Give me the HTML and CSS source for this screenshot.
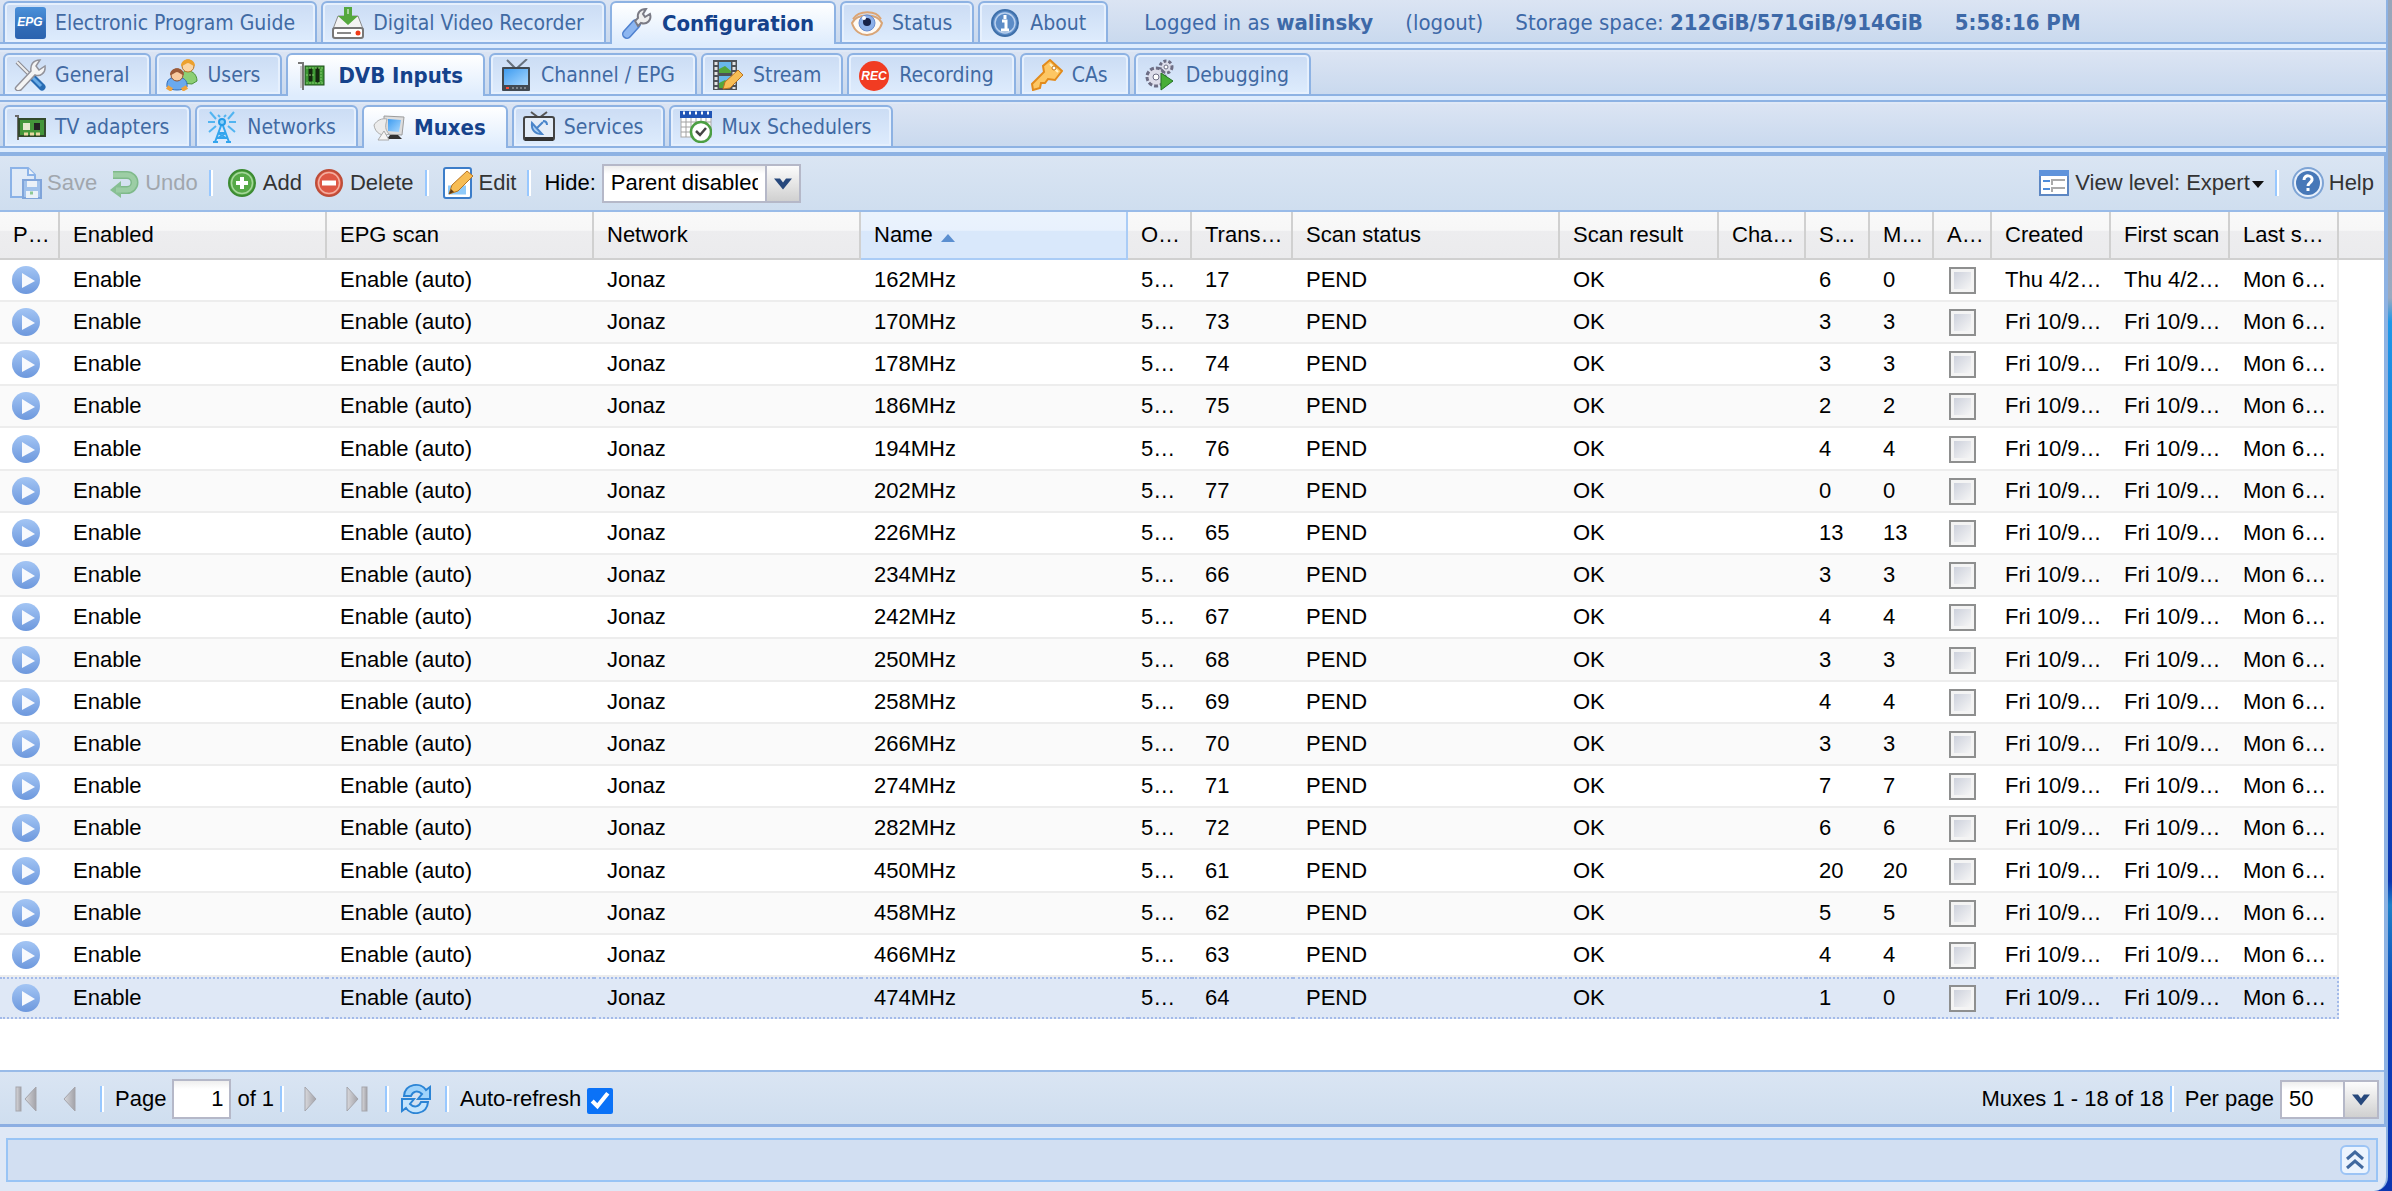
FILE: index.html
```html
<!DOCTYPE html>
<html lang="en">
<head>
    <meta charset="UTF-8">
    <title>Tvheadend</title>
    <link rel="stylesheet" href="styles.css">
</head>
<body>
    <!-- Icon definitions -->
    <svg class="defs" aria-hidden="true">
        <defs>
            <linearGradient id="gBlue" x1="0" y1="0" x2="0" y2="1"><stop offset="0" stop-color="#4a90d9"/><stop offset="1" stop-color="#2a62b0"/></linearGradient>
            <linearGradient id="gScreen" x1="0" y1="0" x2="1" y2="1"><stop offset="0" stop-color="#3f9cf0"/><stop offset="1" stop-color="#a8d8ff"/></linearGradient>
            <linearGradient id="gPlay" x1="0" y1="0" x2="0" y2="1"><stop offset="0" stop-color="#a3c5f4"/><stop offset="1" stop-color="#6d98dd"/></linearGradient>
            <linearGradient id="gGrey" x1="0" y1="0" x2="1" y2="0"><stop offset="0" stop-color="#d8d8dc"/><stop offset="1" stop-color="#a2a2a8"/></linearGradient>
        </defs>
        <symbol id="i-dvr" viewBox="0 0 32 32">
            <path d="M6 9h20l5 13H1z" fill="#f3f3f3" stroke="#8b8b8b"/>
            <rect x="1" y="21" width="30" height="10" rx="2" fill="#fff" stroke="#777" stroke-width="2"/>
            <path d="M5 26h14" stroke="#888" stroke-width="2"/>
            <circle cx="26" cy="26" r="2.5" fill="#f03a17"/>
            <path d="M12 0h8v9h6L16 18 6 9h6z" fill="#55a83e"/>
            <path d="M16 2v5" stroke="#fff" stroke-width="1"/>
        </symbol>
        <symbol id="i-wrench" viewBox="0 0 32 32">
            <path d="M15 16L6 26" stroke="#4f81cf" stroke-width="10" stroke-linecap="round"/>
            <path d="M15 16L6 26" stroke="#8db6f0" stroke-width="7" stroke-linecap="round"/>
            <path d="M14 13l3-3c-1-5 2-9 8-9l-3 5 2 3 5-3c2 6-3 11-9 9l-3 3z" fill="#eee" stroke="#7b7b85" stroke-width="2"/>
        </symbol>
        <symbol id="i-eye" viewBox="0 0 32 32">
            <path d="M1 16C6 6 26 6 31 16c-4 15-25 17-30 0z" fill="#fffaf3" stroke="#d8a577" stroke-width="2"/>
            <path d="M2 12C8 3 25 3 30 12" fill="none" stroke="#dda573" stroke-width="2"/>
            <circle cx="16" cy="16" r="8" fill="#8db1ea" stroke="#688dd1"/>
            <circle cx="16" cy="15" r="4" fill="#17234a"/>
            <circle cx="13" cy="11" r="2" fill="#fff"/>
        </symbol>
        <symbol id="i-info" viewBox="0 0 32 32">
            <circle cx="16" cy="16" r="13" fill="#5c8cc7" stroke="#3f70aa" stroke-width="2"/>
            <circle cx="16" cy="16" r="10" fill="none" stroke="#b9d0ee" stroke-width="1.5"/>
            <path d="M16 8v4M13 14h4v9M12 23h8" stroke="#fff" stroke-width="3" fill="none"/>
        </symbol>
        <symbol id="i-tools" viewBox="0 0 32 32">
            <path d="M3 3l14 14" stroke="#8a8a92" stroke-width="4"/>
            <path d="M3 3l14 14" stroke="#eee" stroke-width="2"/>
            <path d="M18 18l10 10" stroke="#286cb4" stroke-width="7" stroke-linecap="round"/>
            <path d="M18 18l9 9" stroke="#69ace7" stroke-width="3"/>
            <path d="M2 28l15-16c-1-6 2-11 9-11l-4 6 3 4 6-4c1 7-5 11-10 9L7 31c-4 2-7-1-5-3z" fill="#f4f4f4" stroke="#92929a" stroke-width="1.5"/>
        </symbol>
        <symbol id="i-users" viewBox="0 0 32 32">
            <path d="M14 24c-1-9 3-12 8-12s9 4 9 10l-5 3z" fill="#8ccf75" stroke="#4c933c"/>
            <circle cx="22" cy="7" r="6" fill="#fbd5a4" stroke="#b87423"/>
            <path d="M15 7c0-9 14-9 14 0-3 0-5-3-7-3s-4 3-7 3z" fill="#eca12f"/>
            <path d="M1 28c-1-8 4-10 10-10s11 3 10 10c-5 4-15 4-20 0z" fill="#6aa9ee" stroke="#2f6cb9"/>
            <path d="M1 28l5 3M21 28l-5 3" stroke="#f0a33c" stroke-width="4"/>
            <circle cx="11" cy="16" r="6" fill="#f8cba0" stroke="#8d5432"/>
            <path d="M4 16c0-9 14-9 14 0-3 0-5-3-7-3s-4 3-7 3z" fill="#9c5b38"/>
        </symbol>
        <symbol id="i-card" viewBox="0 0 32 32">
            <path d="M1 3h5v27" fill="none" stroke="#777" stroke-width="2"/>
            <path d="M4 6v22" stroke="#c8c8c8" stroke-width="2"/>
            <rect x="8" y="6" width="19" height="19" fill="#3f9a35" stroke="#1f4f1b"/>
            <path d="M12 9h3v12h-3zM19 8h3v14h-3z" fill="#15280f" stroke="#15280f"/>
            <path d="M9 8h17M9 23h17M9 15h9M24 9v13" stroke="#86c96e" stroke-dasharray="2 1"/>
        </symbol>
        <symbol id="i-tv" viewBox="0 0 32 32">
            <path d="M7 1l9 9L27 0" fill="none" stroke="#68727e" stroke-width="2"/>
            <rect x="2" y="8" width="28" height="24" rx="1" fill="#424a52"/>
            <rect x="4" y="10" width="24" height="16" fill="url(#gScreen)"/>
            <path d="M6 29h3" stroke="#ff4b37" stroke-width="2"/><path d="M12 29h16" stroke="#b7bcc2" stroke-width="1" stroke-dasharray="2 2"/>
        </symbol>
        <symbol id="i-film" viewBox="0 0 32 32">
            <rect x="1" y="1" width="24" height="30" fill="#4d5157"/>
            <path d="M4 3v27M22 3v27" stroke="#e2e2e2" stroke-width="3" stroke-dasharray="3 2"/>
            <rect x="7" y="3" width="12" height="11" fill="#69b7ea"/><rect x="7" y="17" width="12" height="12" fill="#69b7ea"/>
            <path d="M7 10l6-3 6 5v2H7zM7 24l6-3 6 5v3H7z" fill="#54a63c"/>
            <path d="M11 30l2-7L26 11l5 5-13 13z" fill="#f7bd55" stroke="#ba7320"/>
        </symbol>
        <symbol id="i-key" viewBox="0 0 32 32">
            <path d="M19 1l12 11-7 9-7-1-3 4h-4l-1 5-7 2-1-6 12-12-1-6z" fill="#fdc764" stroke="#e28b1c" stroke-width="2"/>
            <path d="M19 5l8 8" stroke="#fff0c4" stroke-width="2"/><circle cx="23" cy="9" r="2" fill="#fff" stroke="#c57614"/>
        </symbol>
        <symbol id="i-gears" viewBox="0 0 32 32">
            <circle cx="21" cy="8" r="6" fill="#ddddea" stroke="#6d6d84" stroke-width="3" stroke-dasharray="3 2"/><circle cx="21" cy="8" r="2" fill="#fff" stroke="#6d6d84"/>
            <circle cx="11" cy="18" r="9" fill="#ddddea" stroke="#6d6d84" stroke-width="3" stroke-dasharray="4 2"/><circle cx="11" cy="18" r="3" fill="#fff" stroke="#6d6d84"/>
            <path d="M16 14l12 8-12 9z" fill="#47ae36" stroke="#247323"/>
        </symbol>
        <symbol id="i-adapter" viewBox="0 0 32 32">
            <path d="M1 5h3v24" fill="none" stroke="#686868" stroke-width="2"/>
            <rect x="5" y="8" width="26" height="17" fill="#44963a" stroke="#334a2b" stroke-width="2"/>
            <rect x="9" y="12" width="7" height="7" fill="#e5e9cd"/><rect x="20" y="12" width="6" height="7" fill="#222"/>
            <path d="M10 23h16" stroke="#e8d9a0" stroke-width="3" stroke-dasharray="4 2"/>
        </symbol>
        <symbol id="i-tower" viewBox="0 0 32 32">
            <path d="M16 12L9 31M16 12l7 19M12 22h8M11 27h10M7 31h5M20 31h5M12 27l8-5M20 27l-8-5" fill="none" stroke="#34a5ee" stroke-width="2"/>
            <circle cx="16" cy="11" r="3" fill="#8fd1fa" stroke="#269ce8" stroke-width="2"/>
            <path d="M10 8L4 1M9 11H2M10 15l-7 6M22 8l6-7M23 11h7M22 15l7 6M12 4l2 2M20 4l-2 2" stroke="#51b4f1" stroke-width="2"/>
        </symbol>
        <symbol id="i-mux" viewBox="0 0 32 32">
            <path d="M11 4l20 1-2 18-18-1z" fill="#ddd" stroke="#9c9c9c"/>
            <path d="M15 7l13 1-2 12-11-1z" fill="url(#gScreen)"/>
            <path d="M17 23h8l4 4H14z" fill="#333"/>
            <path d="M1 13c3-5 8-7 13-6-2 8-2 10 2 15-7 3-14-1-15-9z" fill="#ececec" stroke="#acacac"/>
            <path d="M5 28l6-9 5 9z" fill="#f5f5f5" stroke="#aaa"/>
        </symbol>
        <symbol id="i-services" viewBox="0 0 32 32">
            <path d="M8 1l8 6 8-6" fill="none" stroke="#555" stroke-width="2"/>
            <rect x="1" y="6" width="30" height="23" rx="2" fill="#e4edf8" stroke="#444" stroke-width="2"/>
            <path d="M2 28h28" stroke="#333" stroke-width="4"/>
            <path d="M9 12c-1 7 3 11 10 11zM14 17l6-6M20 10c2 0 4 1 4 4" fill="#acd0f5" stroke="#4985ca" stroke-width="2"/>
        </symbol>
        <symbol id="i-sched" viewBox="0 0 32 32">
            <rect x="1" y="1" width="30" height="25" fill="#fff" stroke="#a9a9a9"/>
            <path d="M1 11h30M1 16h30M1 21h30M6 6v20M11 6v20M16 6v20M21 6v20M26 6v20" stroke="#a2a2a2"/>
            <path d="M0 0h32v7H0z" fill="#2054b5"/><path d="M3 2h28" stroke="#fff" stroke-width="3" stroke-dasharray="2 4"/>
            <circle cx="21" cy="21" r="10" fill="#fff" stroke="#4c9f43" stroke-width="2.5"/>
            <path d="M16 20l4 4 6-7" fill="none" stroke="#444" stroke-width="2.5"/>
        </symbol>
        <symbol id="i-save" viewBox="0 0 32 32">
            <path d="M1 1h17l7 7v22H1z" fill="#eaf2fc" stroke="#4f8ce0" stroke-width="2"/>
            <path d="M18 1v7h7" fill="#fff" stroke="#4f8ce0" stroke-width="2"/>
            <rect x="13" y="13" width="18" height="18" fill="#7aaae9" stroke="#3d74c8" stroke-width="2"/>
            <rect x="17" y="14" width="10" height="6" fill="#fff"/><rect x="16" y="24" width="12" height="7" fill="#fff"/><path d="M20 26h3" stroke="#55b54a" stroke-width="3"/>
        </symbol>
        <symbol id="i-undo" viewBox="0 0 32 32">
            <path d="M5 8h14a7 7 0 0 1 0 15H9" fill="none" stroke="#3a9a38" stroke-width="8"/>
            <path d="M2 23l11-9v17z" fill="#4aa548"/>
            <path d="M5 8h14a7 7 0 0 1 0 15H8" fill="none" stroke="#6fbd68" stroke-width="5"/>
        </symbol>
        <symbol id="i-add" viewBox="0 0 32 32">
            <circle cx="16" cy="16" r="13" fill="#56a947" stroke="#3c8b32" stroke-width="2"/><circle cx="16" cy="16" r="10.5" fill="none" stroke="#a6d79b" stroke-width="1.5"/>
            <path d="M16 10v12M10 16h12" stroke="#fff" stroke-width="4"/>
        </symbol>
        <symbol id="i-delete" viewBox="0 0 32 32">
            <circle cx="16" cy="16" r="13" fill="#de5744" stroke="#bd4d38" stroke-width="2"/><circle cx="16" cy="16" r="10.5" fill="none" stroke="#f3ae9f" stroke-width="1.5"/>
            <path d="M9 16h14" stroke="#fff" stroke-width="5"/>
        </symbol>
        <symbol id="i-edit" viewBox="0 0 32 32">
            <rect x="2" y="1" width="27" height="30" rx="2" fill="#fff" stroke="#3c7dc9" stroke-width="2"/>
            <path d="M6 25h18M6 21h18" stroke="#8fcaf9" stroke-width="5"/>
            <path d="M7 27l3-9L25 4l6 5-15 15z" fill="#f7bd55" stroke="#b87624"/><path d="M7 27l2-5 3 3z" fill="#5b3a17"/>
        </symbol>
        <symbol id="i-view" viewBox="0 0 32 32">
            <rect x="2" y="4" width="28" height="24" fill="#fff" stroke="#5d87c3" stroke-width="2"/>
            <path d="M1 6h30" stroke="#5f93db" stroke-width="6"/>
            <path d="M5 14h7M5 22h7" stroke="#4f8cd9" stroke-width="2"/><path d="M14 18v-5h13M14 25v-4h13" fill="none" stroke="#aaa" stroke-width="2"/>
        </symbol>
        <symbol id="i-help" viewBox="0 0 32 32">
            <circle cx="16" cy="16" r="15" fill="#e8f0fb" stroke="#7ea4d5" stroke-width="2"/><circle cx="16" cy="16" r="12" fill="#4778b8"/>
            <path d="M12 13c0-6 9-5 8 0-1 3-4 3-4 6M16 21v3" fill="none" stroke="#fff" stroke-width="3"/>
        </symbol>
        <symbol id="i-play" viewBox="0 0 32 32">
            <circle cx="16" cy="16" r="14" fill="url(#gPlay)"/>
            <path d="M12 9l13 8-13 7z" fill="#f7f9fd"/>
        </symbol>
        <symbol id="i-prev" viewBox="0 0 32 32"><path d="M20 4v24L9 16z" fill="url(#gGrey)" stroke="#a5a5ab"/></symbol>
        <symbol id="i-next" viewBox="0 0 32 32"><path d="M10 4v24l11-12z" fill="url(#gGrey)" stroke="#a5a5ab"/></symbol>
        <symbol id="i-first" viewBox="0 0 32 32"><path d="M26 4v24L15 16z" fill="url(#gGrey)" stroke="#a5a5ab"/><rect x="6" y="4" width="5" height="24" fill="url(#gGrey)" stroke="#a5a5ab"/></symbol>
        <symbol id="i-last" viewBox="0 0 32 32"><path d="M7 4v24l11-12z" fill="url(#gGrey)" stroke="#a5a5ab"/><rect x="22" y="4" width="5" height="24" fill="url(#gGrey)" stroke="#a5a5ab"/></symbol>
        <symbol id="i-refresh" viewBox="0 0 32 32">
            <path d="M4 13c1-13 17-14 22-6l4-3v12H18l4-5c-4-4-9-3-11 2z" fill="#9fd3fb" stroke="#2b84d5" stroke-width="2"/>
            <path d="M28 19c-1 13-17 14-22 6l-4 3V16h12l-4 5c4 4 9 3 11-2z" fill="#c4e4fd" stroke="#2b84d5" stroke-width="2"/>
        </symbol>
        <symbol id="i-chevron" viewBox="0 0 32 32"><path d="M7 11h6l3 4 3-4h6l-9 11z" fill="#27487c"/></symbol>
        <symbol id="i-collapse" viewBox="0 0 32 32"><path d="M8 15l8-7 8 7M8 24l8-7 8 7" fill="none" stroke="#41699f" stroke-width="3"/></symbol>
    </svg>

    <div class="app">
        <header>
            <nav class="strip">
                <a class="tab" href="#">
                    <svg viewBox="0 0 32 32">
                        <rect x="1" y="0" width="31" height="32" rx="3" fill="url(#gBlue)"/>
                        <path d="M2 21c10-1 20-3 29-7v15a2 2 0 0 1-2 2H4a2 2 0 0 1-2-2z" fill="#2c63ad" opacity=".5"/>
                        <text x="16" y="19" class="icon-text">EPG</text>
                    </svg>Electronic Program Guide</a>
                <a class="tab" href="#"><svg><use href="#i-dvr"/></svg>Digital Video Recorder</a>
                <a class="tab active" href="#"><svg><use href="#i-wrench"/></svg>Configuration</a>
                <a class="tab" href="#"><svg><use href="#i-eye"/></svg>Status</a>
                <a class="tab" href="#"><svg><use href="#i-info"/></svg>About</a>
                <div class="login">
                    <span>Logged in as <b>walinsky</b></span>
                    <a href="#">(logout)</a>
                    <span>Storage space: <b>212GiB/571GiB/914GiB</b></span>
                    <b>5:58:16 PM</b>
                </div>
            </nav>
            <nav class="strip">
                <a class="tab" href="#"><svg><use href="#i-tools"/></svg>General</a>
                <a class="tab" href="#"><svg><use href="#i-users"/></svg>Users</a>
                <a class="tab active" href="#"><svg><use href="#i-card"/></svg>DVB Inputs</a>
                <a class="tab" href="#"><svg><use href="#i-tv"/></svg>Channel / EPG</a>
                <a class="tab" href="#"><svg><use href="#i-film"/></svg>Stream</a>
                <a class="tab" href="#">
                    <svg viewBox="0 0 32 32">
                        <circle cx="16" cy="17" r="15" fill="#f13c22"/>
                        <text x="16" y="21" class="icon-text">REC</text>
                    </svg>Recording</a>
                <a class="tab" href="#"><svg><use href="#i-key"/></svg>CAs</a>
                <a class="tab" href="#"><svg><use href="#i-gears"/></svg>Debugging</a>
            </nav>
            <nav class="strip">
                <a class="tab" href="#"><svg><use href="#i-adapter"/></svg>TV adapters</a>
                <a class="tab" href="#"><svg><use href="#i-tower"/></svg>Networks</a>
                <a class="tab active" href="#"><svg><use href="#i-mux"/></svg>Muxes</a>
                <a class="tab" href="#"><svg><use href="#i-services"/></svg>Services</a>
                <a class="tab" href="#"><svg><use href="#i-sched"/></svg>Mux Schedulers</a>
            </nav>
        </header>

        <main class="panel">
            <div class="toolbar">
                <button class="btn" disabled><svg><use href="#i-save"/></svg>Save</button>
                <button class="btn" disabled><svg><use href="#i-undo"/></svg>Undo</button>
                <i class="sep"></i>
                <button class="btn"><svg><use href="#i-add"/></svg>Add</button>
                <button class="btn"><svg><use href="#i-delete"/></svg>Delete</button>
                <i class="sep"></i>
                <button class="btn"><svg><use href="#i-edit"/></svg>Edit</button>
                <i class="sep"></i>
                <label for="hide">Hide:</label>
                <span class="combo">
                    <select id="hide"><option>Parent disabled</option></select>
                    <svg><use href="#i-chevron"/></svg>
                </span>
                <span class="fill"></span>
                <button class="btn"><svg><use href="#i-view"/></svg><span>View level: Expert<i class="arrow"></i></span></button>
                <i class="sep"></i>
                <button class="btn"><svg><use href="#i-help"/></svg>Help</button>
            </div>

            <div class="grid">
                <table>
                    <colgroup>
                        <col class="w-play"><col class="w-wide"><col class="w-wide"><col class="w-wide"><col class="w-wide">
                        <col class="w-num"><col class="w-ts"><col class="w-wide"><col class="w-result"><col class="w-cha">
                        <col class="w-num"><col class="w-num"><col class="w-check">
                        <col class="w-date"><col class="w-date"><col class="w-last"><col>
                    </colgroup>
                    <thead>
                        <tr>
                            <th>P…</th><th>Enabled</th><th>EPG scan</th><th>Network</th><th class="sorted">Name</th>
                            <th>O…</th><th>Trans…</th><th>Scan status</th><th>Scan result</th><th>Cha…</th>
                            <th>S…</th><th>M…</th><th>A…</th><th>Created</th><th>First scan</th><th>Last s…</th><th></th>
                        </tr>
                    </thead>
                    <tbody id="rows"></tbody>
                </table>
            </div>

            <div class="toolbar paging">
                <button class="btn" aria-label="First page"><svg><use href="#i-first"/></svg></button>
                <button class="btn" aria-label="Previous page"><svg><use href="#i-prev"/></svg></button>
                <i class="sep"></i>
                <label for="page">Page</label>
                <input id="page" class="page" type="text" value="1">
                <span>of 1</span>
                <i class="sep"></i>
                <button class="btn" aria-label="Next page"><svg><use href="#i-next"/></svg></button>
                <button class="btn" aria-label="Last page"><svg><use href="#i-last"/></svg></button>
                <i class="sep"></i>
                <button class="btn" aria-label="Refresh"><svg><use href="#i-refresh"/></svg></button>
                <i class="sep"></i>
                <label for="auto">Auto-refresh</label>
                <input id="auto" class="auto" type="checkbox" checked>
                <span class="fill"></span>
                <span>Muxes 1 - 18 of 18</span>
                <i class="sep"></i>
                <label for="perpage">Per page</label>
                <span class="combo small">
                    <select id="perpage"><option>50</option></select>
                    <svg><use href="#i-chevron"/></svg>
                </span>
            </div>
        </main>

        <footer>
            <div class="log">
                <button class="expand" aria-label="Expand log"><svg><use href="#i-collapse"/></svg></button>
            </div>
        </footer>
    </div>

    <script>
        // name, transport stream id, services, mapped
        const muxes = [
            ['162MHz', 17, 6, 0], ['170MHz', 73, 3, 3], ['178MHz', 74, 3, 3],
            ['186MHz', 75, 2, 2], ['194MHz', 76, 4, 4], ['202MHz', 77, 0, 0],
            ['226MHz', 65, 13, 13], ['234MHz', 66, 3, 3], ['242MHz', 67, 4, 4],
            ['250MHz', 68, 3, 3], ['258MHz', 69, 4, 4], ['266MHz', 70, 3, 3],
            ['274MHz', 71, 7, 7], ['282MHz', 72, 6, 6], ['450MHz', 61, 20, 20],
            ['458MHz', 62, 5, 5], ['466MHz', 63, 4, 4], ['474MHz', 64, 1, 0]
        ];

        document.getElementById('rows').innerHTML = muxes.map((m, i) => {
            const date = i === 0 ? 'Thu 4/2…' : 'Fri 10/9…';
            return `<tr${i === muxes.length - 1 ? ' class="selected"' : ''}>
                <td class="play"><svg><use href="#i-play"/></svg></td>
                <td>Enable</td><td>Enable (auto)</td><td>Jonaz</td><td>${m[0]}</td>
                <td>5…</td><td>${m[1]}</td><td>PEND</td><td>OK</td><td></td>
                <td>${m[2]}</td><td>${m[3]}</td>
                <td class="check"><input type="checkbox" aria-label="${m[0]}"></td>
                <td>${date}</td><td>${date}</td><td>Mon 6…</td><td></td>
            </tr>`;
        }).join('');
    </script>
</body>
</html>
```

FILE: styles.css
```css
* {
    box-sizing: border-box;
}
body {
    margin: 0;
    padding-right: 4px;
    font-family: "Liberation Sans", Arial, sans-serif;
    font-size: 22px;
    line-height: 28px;
    color: #000;
    background: linear-gradient(#98a6ba 0, #9aaac0 25%, #1f98e8 27%, #1560cc 50%, #0b36b0 74%, #1d80c8 76%, #0b3fb8 85%, #0b36b0 100%);
}
.defs {
    position: absolute;
    width: 0;
    height: 0;
}
.icon-text {
    font: italic bold 12px "Liberation Sans", Arial, sans-serif;
    fill: #fff;
    text-anchor: middle;
}
.app {
    display: flex;
    flex-direction: column;
    min-height: 100vh;
    background: #dfe8f6;
    border-right: 2px solid #8db2e3;
    border-bottom-right-radius: 14px;
}
svg {
    width: 32px;
    height: 32px;
    flex: none;
}

/* Tab strips */
.strip {
    display: flex;
    gap: 4px;
    height: 52px;
    padding: 1px 3px 8px;
    background: linear-gradient(#8db2e3, #8db2e3) 0 42px / 100% 2px no-repeat,
                linear-gradient(#8db2e3, #8db2e3) 0 48px / 100% 2px no-repeat,
                linear-gradient(#deecfd, #deecfd) 0 44px / 100% 4px no-repeat,
                linear-gradient(#dbe4f3, #c9d9ee 43px, #dfe8f6 50px);
}
.tab {
    display: flex;
    align-items: center;
    gap: 9px;
    height: 43px;
    padding: 0 20px 0 9px;
    border: 2px solid #8db2e3;
    border-radius: 6px 6px 0 0;
    font: 21px "DejaVu Sans Condensed", Tahoma, sans-serif;
    color: #416aa3;
    text-decoration: none;
    white-space: nowrap;
    background: linear-gradient(#cbdcf4, #deecfd);
    box-shadow: inset 0 0 0 2px #e6f0fd;
}
.tab.active {
    border-bottom: 0;
    font-size: 22px;
    font-weight: bold;
    color: #15428b;
    background: linear-gradient(#fff, #deecfd);
    box-shadow: none;
}
.login {
    display: flex;
    align-items: center;
    gap: 32px;
    margin-left: 32px;
    font: 22px "DejaVu Sans Condensed", Tahoma, sans-serif;
    color: #3d69a8;
    white-space: nowrap;
}
.login a {
    color: inherit;
    text-decoration: none;
}

/* Toolbars */
.panel {
    display: flex;
    flex: 1;
    flex-direction: column;
    margin-top: -2px;
    border-top: 2px solid #8db2e3;
    border-right: 2px solid #8db2e3;
}
.toolbar {
    display: flex;
    align-items: center;
    height: 56px;
    padding: 0 5px 0 10px;
    gap: 6px;
    border-bottom: 2px solid #99bbe8;
    background: linear-gradient(#dae5f3, #cfdeef);
    white-space: nowrap;
}
.btn {
    display: flex;
    align-items: center;
    gap: 5px;
    margin: 0 5px 0 0;
    padding: 0;
    border: 0;
    font: inherit;
    color: #333;
    background: none;
}
.btn:disabled {
    opacity: 0.55;
    color: #777;
}
.sep {
    width: 4px;
    height: 26px;
    margin-right: 7px;
    border-left: 2px solid #98c8ff;
    border-right: 2px solid #fff;
}
.fill {
    flex: 1;
}
.arrow {
    display: inline-block;
    margin-left: 2px;
    border: 6px solid transparent;
    border-top: 7px solid #111;
    border-bottom: 0;
    vertical-align: middle;
}
.combo {
    display: flex;
    width: 199px;
    height: 39px;
    border: 2px solid #b5b8c8;
    background: #fff;
}
.combo select {
    flex: 1;
    min-width: 0;
    padding: 0 7px;
    border: 0;
    border-right: 2px solid #b5b8c8;
    appearance: none;
    font: inherit;
    color: #000;
    background: linear-gradient(#eee, #fff 8px);
}
.combo svg {
    height: 35px;
    background: linear-gradient(#fcfcfc, #d0d0d0);
}
.combo.small {
    width: 99px;
}

/* Grid */
.grid {
    flex: 1;
    background: #fff;
}
table {
    width: 100%;
    table-layout: fixed;
    border-collapse: separate;
    border-spacing: 0;
}
.w-play { width: 60px; }
.w-wide { width: 267px; }
.w-num { width: 64px; }
.w-ts { width: 101px; }
.w-result { width: 159px; }
.w-cha { width: 87px; }
.w-check { width: 58px; }
.w-date { width: 119px; }
.w-last { width: 109px; }
th {
    height: 48px;
    padding: 0 0 0 13px;
    border-right: 2px solid #d0d0d0;
    border-bottom: 2px solid #d0d0d0;
    font-weight: normal;
    text-align: left;
    white-space: nowrap;
    background: linear-gradient(#f9f9f9, #f7f7f7 40%, #ededef 41%, #ebebed);
}
th:last-child {
    border-right: 0;
}
th.sorted {
    border-color: #aaccf6;
    background: linear-gradient(#ebf3fd, #e8f1fd 40%, #d9e8fb 41%, #d9e8fb);
}
th.sorted::after {
    content: "";
    display: inline-block;
    margin-left: 8px;
    border: 7px solid transparent;
    border-top: 0;
    border-bottom: 8px solid #5b8fd0;
}
td {
    height: 42px;
    padding: 0 0 0 13px;
    border-bottom: 2px solid #ededed;
    white-space: nowrap;
}
tr:nth-child(5n) td {
    height: 43px;
}
tr:nth-child(even) td {
    background: #fafafa;
}
td.play {
    padding-left: 10px;
}
td.play svg,
td.check input {
    display: block;
}
td:nth-last-child(2) {
    border-right: 2px solid #ededed;
}
tr td:last-child {
    border: 0;
    background: none;
}
.selected td {
    border-top: 2px dotted #a3bae9;
    border-bottom: 2px dotted #a3bae9;
}
tr.selected:nth-child(n) td:not(:last-child) {
    background: #dfe8f6;
}
.selected td:nth-last-child(2) {
    border-right: 2px dotted #a3bae9;
}
.check input {
    width: 27px;
    height: 27px;
    margin: 1px 0 0 2px;
    border: 2px solid #8e8f8f;
    appearance: none;
    background: linear-gradient(135deg, #cdd1dc, #f6f6f6) 3px 3px / 17px 17px no-repeat #f4f4f4;
}

/* Paging bar */
.paging {
    height: 57px;
    padding-top: 2px;
    border-top: 2px solid #99bbe8;
    border-bottom: 3px solid #8caee2;
}
.paging .btn {
    margin-right: 7px;
}
.paging .sep {
    margin-right: 5px;
}
.page {
    width: 59px;
    height: 40px;
    padding: 0 6px;
    border: 2px solid #b5b8c8;
    font: inherit;
    text-align: right;
    background: linear-gradient(#eee, #fff 8px);
}
.auto {
    width: 26px;
    height: 26px;
    margin: 4px 0 0;
    accent-color: #0b72f7;
}

/* Log panel */
footer {
    padding: 11px 8px 9px 6px;
}
.log {
    display: flex;
    align-items: center;
    justify-content: flex-end;
    height: 44px;
    padding-right: 6px;
    border: 2px solid #99c4f5;
    background: #d2dff2;
}
.expand {
    display: flex;
    align-items: center;
    justify-content: center;
    width: 30px;
    height: 30px;
    padding: 0;
    border: 2px solid #9cc4f5;
    border-radius: 6px;
    background: #ecf4fe;
}
```
